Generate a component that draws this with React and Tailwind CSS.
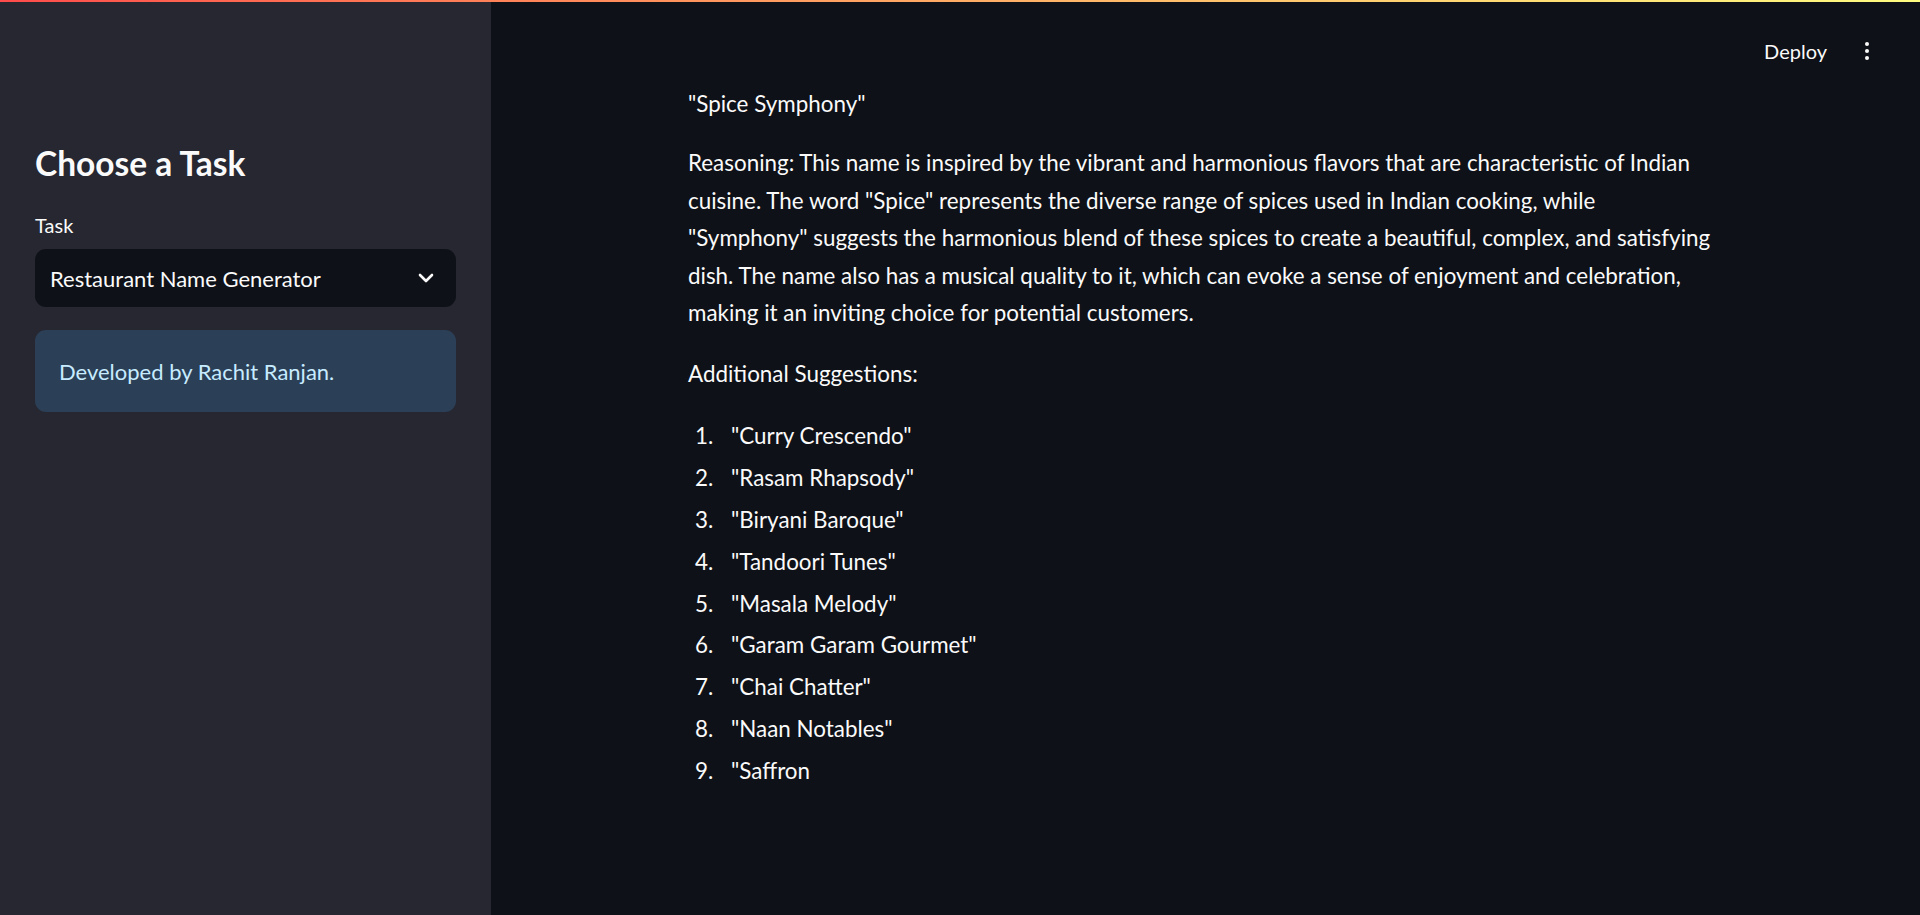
import React from 'react';

const suggestions = [
  '"Curry Crescendo"',
  '"Rasam Rhapsody"',
  '"Biryani Baroque"',
  '"Tandoori Tunes"',
  '"Masala Melody"',
  '"Garam Garam Gourmet"',
  '"Chai Chatter"',
  '"Naan Notables"',
  '"Saffron',
];

function Sidebar() {
  return (
    <aside className="w-[491px] shrink-0 bg-[#262730] px-[35px] pt-[140px]">
      <h2 className="text-[33.5px] font-bold leading-[46px] text-[#fafafa]">Choose a Task</h2>
      <div className="mt-[26px] text-[20px] leading-[26px] text-[#fafafa]">Task</div>
      <div className="mt-[11px] flex h-[58px] items-center justify-between rounded-[11px] bg-[#0e1117] pl-[15px] pr-[22px]">
        <span className="text-[22px] text-[#fafafa]">Restaurant Name Generator</span>
        <svg width="16" height="10" viewBox="0 0 16 10" fill="none">
          <path d="M2 2l6 6 6-6" stroke="#fafafa" strokeWidth="2.6" strokeLinecap="round" strokeLinejoin="round" />
        </svg>
      </div>
      <div className="mt-[23px] flex h-[82px] items-center rounded-[11px] bg-[#2b3f57] px-[24px]">
        <span className="text-[22px] text-[#c7ebff]">Developed by Rachit Ranjan.</span>
      </div>
    </aside>
  );
}

function Header() {
  return (
    <div className="flex h-[0px] justify-end">
      <div className="flex h-[100px] items-start gap-[38px] pr-[51px] pt-[37px]">
        <span className="text-[20px] leading-[28px] text-[#fafafa]">Deploy</span>
        <div className="flex flex-col items-center gap-[3px] pt-[5px]">
          <span className="h-[4px] w-[4px] rounded-full bg-[#fafafa]"></span>
          <span className="h-[4px] w-[4px] rounded-full bg-[#fafafa]"></span>
          <span className="h-[4px] w-[4px] rounded-full bg-[#fafafa]"></span>
        </div>
      </div>
    </div>
  );
}

export default function App() {
  return (
    <div
      className="relative flex h-[915px] w-full overflow-hidden bg-[#0e1117] text-[#fafafa]"
      style={{ fontFamily: '"Lato", "Noto Sans", sans-serif' }}
    >
      <div className="absolute left-0 right-0 top-0 z-10 h-[2px] bg-gradient-to-r from-[#ff4b4b] to-[#fffd80]"></div>
      <Sidebar />
      <main className="flex-1">
        <Header />
        <div className="ml-[197px] w-[1027px] pt-[85px] text-[22.4px] leading-[37.5px]">
          <p className="mb-[21.5px]">"Spice Symphony"</p>
          <p className="mb-[23.5px]">
            Reasoning: This name is inspired by the vibrant and harmonious flavors that are characteristic of Indian
            cuisine. The word "Spice" represents the diverse range of spices used in Indian cooking, while
            "Symphony" suggests the harmonious blend of these spices to create a beautiful, complex, and satisfying
            dish. The name also has a musical quality to it, which can evoke a sense of enjoyment and celebration,
            making it an inviting choice for potential customers.
          </p>
          <p className="mb-[24.5px]">Additional Suggestions:</p>
          <ol className="flex flex-col gap-[4.4px]">
            {suggestions.map((s, i) => (
              <li key={i} className="flex">
                <span className="w-[43px] pl-[7px]">{i + 1}.</span>
                <span>{s}</span>
              </li>
            ))}
          </ol>
        </div>
      </main>
    </div>
  );
}
